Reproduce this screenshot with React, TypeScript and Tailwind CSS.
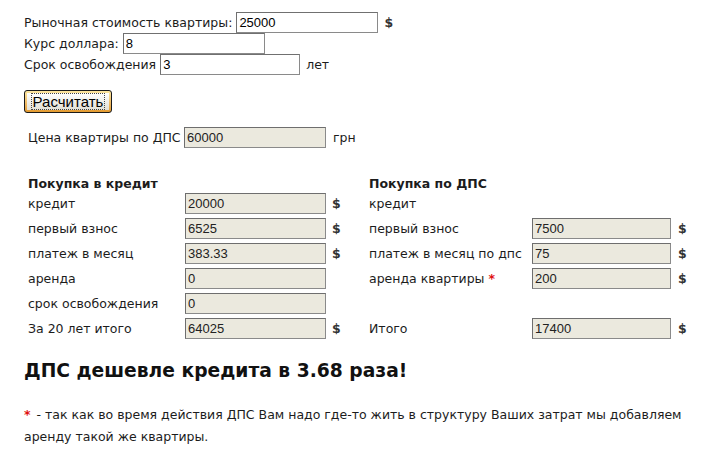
import React from 'react'

const label = "font-['DejaVu_Sans',sans-serif] text-[12.5px] leading-[21px] text-[#1c1c1c]"
const val = "font-['Liberation_Sans',Arial,sans-serif] text-[13px]"

const Field = ({ value, ro, w = 'w-[141px]' }: { value: string; ro?: boolean; w?: string }) => (
  <input
    readOnly
    value={value}
    className={`${w} h-[21px] px-[2px] border ${val} outline-none ${
      ro
        ? 'bg-[#ebe9de] text-[#222] border-[#8a8a8a] border-t-[#6e6e6e] border-l-[#6e6e6e]'
        : 'bg-white text-black border-[#8a8a8a] border-t-[#707070] border-l-[#707070]'
    }`}
  />
)

// знак валюты в отдельной ячейке
const Unit = ({ pl = 'pl-[6px]' }: { pl?: string }) => (
  <span className={`${label} ${pl} font-bold text-[#333]`}>$</span>
)

const Star = () => <span className="text-[#e01010] font-bold">*</span>

export default function App() {
  return (
    <div className="w-[707px] h-[453px] bg-white overflow-hidden pl-[24px] pt-[12px] text-[12.5px] leading-[21px]">
      {/* исходные данные */}
      <div className="flex flex-col">
        <div className="flex items-center h-[21px]">
          <span className={`${label} mr-[4px]`}>Рыночная стоимость квартиры:</span>
          <Field value="25000" w="w-[142px]" />
          <Unit />
        </div>
        <div className="flex items-center h-[21px]">
          <span className={`${label} mr-[4px]`}>Курс доллара:</span>
          <Field value="8" w="w-[142px]" />
        </div>
        <div className="flex items-center h-[21px]">
          <span className={`${label} mr-[4px]`}>Срок освобождения</span>
          <Field value="3" w="w-[140px]" />
          <span className={`${label} ml-[6px]`}>лет</span>
        </div>
      </div>

      <button className="mt-[15px] flex w-[88px] h-[23px] rounded-[3px] border border-[#1a1a1a] p-[2px] bg-gradient-to-b from-[#fde7a0] to-[#e39a2e]">
        <span className="flex items-center justify-center w-full h-full bg-gradient-to-b from-[#ffffff] to-[#e2e0d6]">
          <span className="font-['Liberation_Sans',Arial,sans-serif] text-[15px] text-black px-[1px] leading-[15px] outline-1 outline-dotted outline-[#444]">
            Расчитать
          </span>
        </span>
      </button>

      <div className="flex items-center h-[21px] mt-[14px] pl-[4px]">
        <span className={`${label} w-[156px]`}>Цена квартиры по ДПС</span>
        <Field value="60000" ro w="w-[142px]" />
        <span className={`${label} ml-[7px]`}>грн</span>
      </div>

      {/* сравнение */}
      <div className="grid grid-cols-[157px_141px_43px_163px_139px_auto] gap-y-[4px] items-center mt-[25px] pl-[4px]">
        <span className={`${label} font-bold col-span-3 h-[16px] leading-[14px]`}>Покупка в кредит</span>
        <span className={`${label} font-bold col-span-3 h-[16px] leading-[14px]`}>Покупка по ДПС</span>

        <span className={label}>кредит</span>
        <Field value="20000" ro />
        <Unit />
        <span className={label}>кредит</span>
        <span />
        <span />

        <span className={label}>первый взнос</span>
        <Field value="6525" ro />
        <Unit />
        <span className={label}>первый взнос</span>
        <Field value="7500" ro w="w-[139px]" />
        <Unit pl="pl-[7px]" />

        <span className={label}>платеж в месяц</span>
        <Field value="383.33" ro />
        <Unit />
        <span className={label}>платеж в месяц по дпс</span>
        <Field value="75" ro w="w-[139px]" />
        <Unit pl="pl-[7px]" />

        <span className={label}>аренда</span>
        <Field value="0" ro />
        <span />
        <span className={label}>
          аренда квартиры <Star />
        </span>
        <Field value="200" ro w="w-[139px]" />
        <Unit pl="pl-[7px]" />

        <span className={label}>срок освобождения</span>
        <Field value="0" ro />
        <span />
        <span className="h-[21px]" />
        <span />
        <span />

        <span className={label}>За 20 лет итого</span>
        <Field value="64025" ro />
        <Unit />
        <span className={label}>Итого</span>
        <Field value="17400" ro w="w-[139px]" />
        <Unit pl="pl-[7px]" />
      </div>

      <h1 className="mt-[20px] font-['DejaVu_Sans',sans-serif] font-bold text-[18.7px] leading-[24px] text-[#111]">
        ДПС дешевле кредита в 3.68 раза!
      </h1>

      <p className="mt-[21px] w-[676px] font-['DejaVu_Sans',sans-serif] text-[12.5px] leading-[22px] text-[#1c1c1c]">
        <span className="text-[#e01010] font-bold mr-[2px]">*</span> - так как во время действия ДПС Вам надо где-то жить в структуру Ваших затрат мы добавляем аренду такой же квартиры.
      </p>
    </div>
  )
}
